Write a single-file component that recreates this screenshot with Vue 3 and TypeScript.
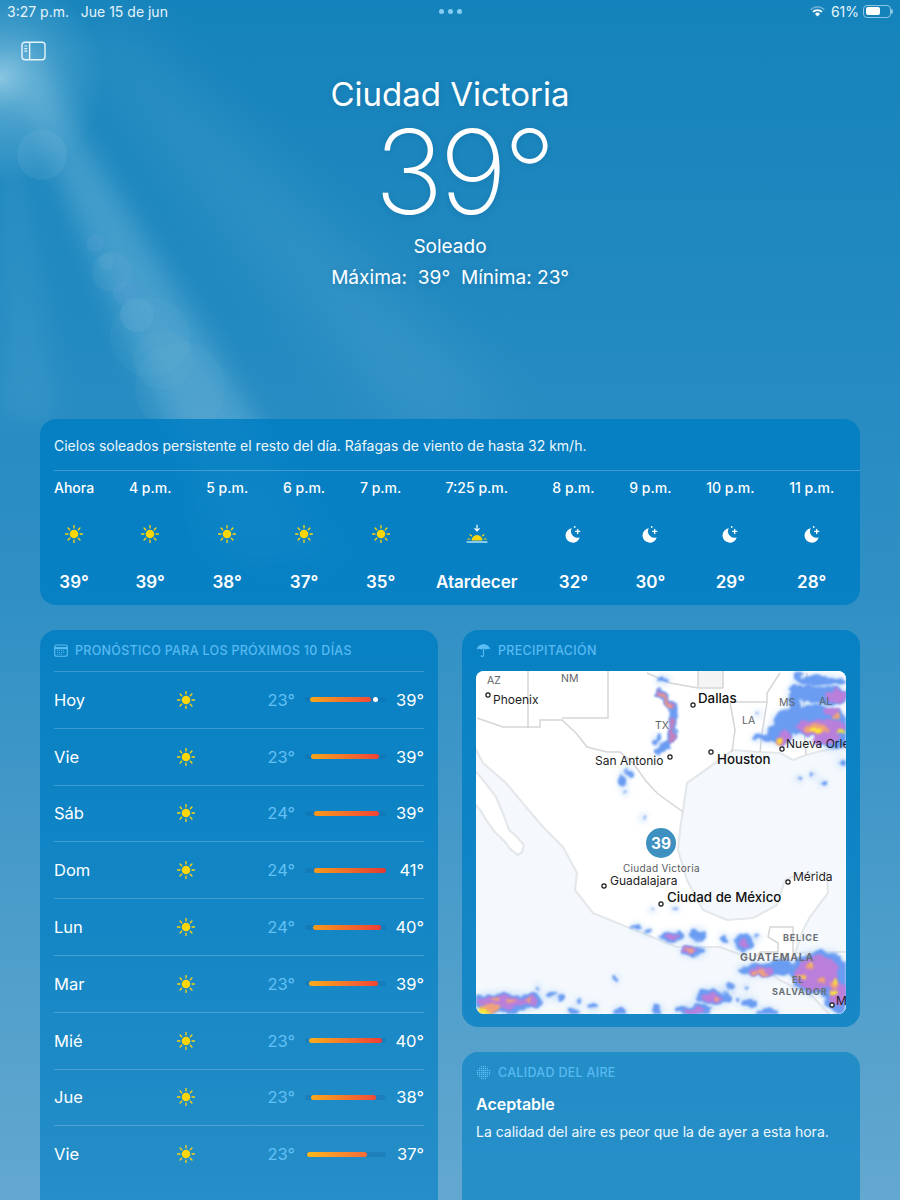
<template>
  <div class="weather">
    <!-- sky: sun rays and lens flares, sits behind the cards -->
    <svg class="sky" viewBox="0 0 900 1200" width="900" height="1200" aria-hidden="true">
      <defs>
        <filter id="soft" x="-30%" y="-30%" width="160%" height="160%"><feGaussianBlur stdDeviation="14" /></filter>
        <filter id="softer" x="-50%" y="-50%" width="200%" height="200%"><feGaussianBlur stdDeviation="30" /></filter>
        <radialGradient id="sunGlow">
          <stop offset="0" stop-color="#b9e1f0" stop-opacity="0.7" />
          <stop offset="0.3" stop-color="#a6d6ea" stop-opacity="0.4" />
          <stop offset="1" stop-color="#8fcbe6" stop-opacity="0" />
        </radialGradient>
      </defs>
      <circle cx="0" cy="78" r="105" fill="url(#sunGlow)" />
      <polygon points="0,50 30,50 340,560 230,560" fill="#a9d8ec" opacity="0.28" filter="url(#soft)" />
      <polygon points="40,20 120,20 520,420 400,420" fill="#a9d8ec" opacity="0.12" filter="url(#softer)" />
      <polygon points="0,130 20,140 60,420 0,420" fill="#a9d8ec" opacity="0.1" filter="url(#soft)" />
      <circle v-for="(f, i) in flares" :key="i" :cx="f[0]" :cy="f[1]" :r="f[2]" :fill="f[3]" :opacity="f[4]" />
    </svg>

    <div class="status">
      <span>3:27 p.m.&nbsp;&nbsp; Jue 15 de jun</span>
      <span class="status-dots"><i /><i /><i /></span>
      <span class="status-right">
        <svg class="wifi" width="15" height="11" viewBox="0 0 15 11">
          <path d="M.8 3.6a9.6 9.6 0 0 1 13.4 0" fill="none" stroke="#fff" stroke-opacity=".35" stroke-width="1.7" />
          <path d="M3 5.9a6.4 6.4 0 0 1 9 0" fill="none" stroke="#fff" stroke-width="1.8" />
          <path d="M7.5 10.4 5 7.9a3.5 3.5 0 0 1 5 0z" fill="#fff" />
        </svg>
        <span>61%</span>
        <span class="battery"><b /></span>
        <span class="nub" />
      </span>
    </div>

    <header class="head">
      <svg class="side-icon" width="25" height="20" viewBox="0 0 25 20" fill="none" stroke="#e6f4fb" stroke-width="1.4">
        <rect x="1" y="1.2" width="23" height="17.6" rx="3" />
        <path d="M8.6 1.2v17.6" />
        <path d="M3.4 5h2.8M3.4 7.6h2.8M3.4 10.2h2.8" stroke-width="1.2" />
      </svg>
      <div class="head-main">
        <div class="city">Ciudad Victoria</div>
        <div class="now">39°</div>
        <div class="cond">Soleado</div>
        <div class="range">Máxima:&nbsp; 39°&nbsp; Mínima: 23°</div>
      </div>
    </header>

    <section class="card hourly">
      <p class="summary">Cielos soleados persistente el resto del día. Ráfagas de viento de hasta 32 km/h.</p>
      <div class="hours">
        <div v-for="h in hours" :key="h.time" class="hour">
          <span class="hour-time">{{ h.time }}</span>
          <span class="hour-icon" v-html="h.icon"></span>
          <span class="hour-temp">{{ h.temp }}</span>
        </div>
      </div>
    </section>

    <div class="columns">
      <section class="card forecast">
        <h3 class="card-title">
          <svg width="14" height="13" viewBox="0 0 14 13" fill="none" stroke="#5cbdf4" stroke-width="1.1">
            <rect x=".7" y="1" width="12.6" height="11.2" rx="2" />
            <path d="M.7 4.1h12.6" stroke-width="2" />
            <path d="M3 6.6h8M3 8.4h8M3 10.2h6" stroke-width=".8" stroke-dasharray="1.2 .8" />
          </svg>
          PRONÓSTICO PARA LOS PRÓXIMOS 10 DÍAS
        </h3>
        <div v-for="(d, i) in days" :key="i" class="day">
          <span class="day-name">{{ d.name }}</span>
          <span class="day-icon" v-html="svgSun"></span>
          <span class="day-low">{{ d.low }}°</span>
          <span class="track">
            <span class="fill" :style="barStyle(d)"></span>
            <span v-if="d.now" class="now-dot" :style="{ left: d.now + 'px' }"></span>
          </span>
          <span class="day-high">{{ d.high }}°</span>
        </div>
      </section>

      <div class="stack">
        <section class="card precip">
          <h3 class="card-title">
            <svg width="15" height="15" viewBox="0 0 15 15" fill="#5cbdf4">
              <path d="M7.5 1.2c3.6 0 6.4 2.400 6.800 5.600-.8-.8-1.500-1-2.200-1-.8 0-1.500.3-2.200 1-.7-.7-1.500-1-2.400-1s-1.700.3-2.400 1c-.7-.7-1.400-1-2.200-1-.7 0-1.400.2-2.200 1C1.100 3.600 3.900 1.200 7.500 1.200z" />
              <path d="M7.500 6.500v5.800c0 1.600-2.200 1.600-2.200.2" fill="none" stroke="#5cbdf4" stroke-width="1.100" stroke-linecap="round" />
            </svg>
            PRECIPITACIÓN
          </h3>
          <div class="map">
            <svg viewBox="0 0 370 343" width="370" height="343" class="map-svg">
              <defs>
                <filter id="rain" filterUnits="userSpaceOnUse" x="0" y="0" width="370" height="343">
                  <feTurbulence type="fractalNoise" baseFrequency="0.1" numOctaves="2" seed="4" result="n" />
                  <feDisplacementMap in="SourceGraphic" in2="n" scale="10" xChannelSelector="R" yChannelSelector="G" />
                  <feGaussianBlur stdDeviation="1.100" />
                </filter>
                <filter id="rainWide" filterUnits="userSpaceOnUse" x="0" y="0" width="370" height="343"><feGaussianBlur stdDeviation="3" /></filter>
                <filter id="coast" filterUnits="userSpaceOnUse" x="-10" y="-10" width="390" height="363"><feGaussianBlur stdDeviation="0.4" /></filter>
              </defs>
              <rect width="370" height="343" fill="#f5f9fd" />
              <g filter="url(#coast)">
                <path :d="landPath" fill="#fff" stroke="#e5e8ea" stroke-width="2.200" stroke-linejoin="round" />
                <path :d="bajaPath" fill="#fff" stroke="#e5e8ea" stroke-width="2.200" stroke-linejoin="round" />
                <rect x="222" y="0" width="25" height="17" fill="#f4f4f5" />
                <path :d="borders" fill="none" stroke="#d6d6d8" stroke-width="1.500" />
              </g>

              <g filter="url(#rainWide)" opacity=".45">
                <ellipse v-for="(b, i) in rain.blue" :key="i" :cx="b[0]" :cy="b[1]" :rx="b[2] + 2" :ry="b[3] + 2" fill="#a7cdf7" />
              </g>
              <g filter="url(#rain)">
                <path d="M184 22 197 36 197 56 194 72 181 81" fill="none" stroke="#6b9cf2" stroke-width="7" stroke-linecap="round" stroke-linejoin="round" />
                <ellipse v-for="(b, i) in rain.blue" :key="i" :cx="b[0]" :cy="b[1]" :rx="b[2]" :ry="b[3]" fill="#6b9cf2" />
              </g>
              <g filter="url(#rain)">
                <path d="M184 22 197 36M197 50 196 70" fill="none" stroke="#c27fbf" stroke-width="4" stroke-linecap="round" />
                <ellipse v-for="(b, i) in rain.purple" :key="i" :cx="b[0]" :cy="b[1]" :rx="b[2]" :ry="b[3]" fill="#b97fdb" />
              </g>
              <g filter="url(#rain)">
                <path d="M186 24 195 35" fill="none" stroke="#efa083" stroke-width="2" stroke-linecap="round" />
                <ellipse v-for="(b, i) in rain.orange" :key="i" :cx="b[0]" :cy="b[1]" :rx="b[2]" :ry="b[3]" fill="#f0a27a" />
              </g>
              <g filter="url(#rain)">
                <ellipse v-for="(b, i) in rain.yellow" :key="i" :cx="b[0]" :cy="b[1]" :rx="b[2]" :ry="b[3]" fill="#fbe733" />
              </g>

              <circle v-for="(c, i) in cityDots" :key="i" :cx="c[0]" :cy="c[1]" r="2.100" fill="#fff" stroke="#1a1a1a" stroke-width="1.200" />
              <text v-for="(l, i) in labels" :key="i" :x="l.x" :y="l.y" :class="l.kind">{{ l.text }}</text>

              <circle cx="185" cy="172" r="15" fill="#3d90bf" />
              <text x="185" y="177.500" text-anchor="middle" class="pin">39</text>
            </svg>
          </div>
        </section>

        <section class="card air">
          <h3 class="card-title">
            <svg width="15" height="15" viewBox="0 0 15 15" fill="#5cbdf4">
              <circle v-for="(p, i) in airDots" :key="i" :cx="p[0]" :cy="p[1]" :r="p[2]" />
            </svg>
            CALIDAD DEL AIRE
          </h3>
          <div class="air-level">Aceptable</div>
          <p class="air-text">La calidad del aire es peor que la de ayer a esta hora.</p>
        </section>
      </div>
    </div>
  </div>
</template>

<script setup lang="ts">
type Day = { name: string; low: number; high: number; from: number; to: number; c1: string; c2: string; now?: number }
type Blob4 = [number, number, number, number]

const rays = [0, 45, 90, 135, 180, 225, 270, 315]
  .map((a) => `<line x1="10" y1="1.600" x2="10" y2="3.900" transform="rotate(${a} 10 10)"/>`)
  .join('')
const svgSun = `<svg viewBox="0 0 20 20" width="20" height="20"><circle cx="10" cy="10" r="4.300" fill="#FFD60A"/><g stroke="#FFD60A" stroke-width="1.300" stroke-linecap="round">${rays}</g></svg>`
const svgMoon = `<svg viewBox="0 0 20 20" width="20" height="20"><path d="M8.800 4.300A7.200 7.200 0 1 0 16.700 13.200 6.300 6.300 0 0 1 8.800 4.300Z" fill="#fff"/><path d="M14.700 5.300v4.200M12.600 7.400h4.200" stroke="#fff" stroke-width="1.300" stroke-linecap="round"/><circle cx="11.700" cy="2.900" r=".9" fill="#fff"/></svg>`
const svgSunset = `<svg viewBox="0 0 22 20" width="22" height="20"><path d="M11 1v5.600M8.800 4.700 11 7l2.200-2.300" fill="none" stroke="#fff" stroke-width="1.200" stroke-linecap="round"/><path d="M5.500 16.600a5.500 5.500 0 0 1 11 0z" fill="#FFD60A"/><g stroke="#FFD60A" stroke-width="1.200" stroke-linecap="round"><path d="M1.800 15h2M18.200 15h2M4 10.600l1.500 1.200M18 10.600l-1.500 1.200"/></g><path d="M.6 18h20.800" stroke="#A6DDF5" stroke-width="1.600"/></svg>`

const hours = [
  { time: 'Ahora', icon: svgSun, temp: '39°' },
  { time: '4 p.m.', icon: svgSun, temp: '39°' },
  { time: '5 p.m.', icon: svgSun, temp: '38°' },
  { time: '6 p.m.', icon: svgSun, temp: '37°' },
  { time: '7 p.m.', icon: svgSun, temp: '35°' },
  { time: '7:25 p.m.', icon: svgSunset, temp: 'Atardecer' },
  { time: '8 p.m.', icon: svgMoon, temp: '32°' },
  { time: '9 p.m.', icon: svgMoon, temp: '30°' },
  { time: '10 p.m.', icon: svgMoon, temp: '29°' },
  { time: '11 p.m.', icon: svgMoon, temp: '28°' },
]

// from / to are px inside the 81px track
const days: Day[] = [
  { name: 'Hoy', low: 23, high: 39, from: 5, to: 66, c1: '#F7A51C', c2: '#F14B38', now: 68 },
  { name: 'Vie', low: 23, high: 39, from: 6, to: 74, c1: '#F7A51C', c2: '#F14438' },
  { name: 'Sáb', low: 24, high: 39, from: 9, to: 74, c1: '#F79A1C', c2: '#F14438' },
  { name: 'Dom', low: 24, high: 41, from: 9, to: 81, c1: '#F79A1C', c2: '#E53935' },
  { name: 'Lun', low: 24, high: 40, from: 8, to: 76, c1: '#F79A1C', c2: '#EF3E38' },
  { name: 'Mar', low: 23, high: 39, from: 4, to: 73, c1: '#F9AE1C', c2: '#F14438' },
  { name: 'Mié', low: 23, high: 40, from: 4, to: 77, c1: '#F9AE1C', c2: '#EF3E38' },
  { name: 'Jue', low: 23, high: 38, from: 6, to: 71, c1: '#F9A81C', c2: '#F14B38' },
  { name: 'Vie', low: 23, high: 37, from: 2, to: 62, c1: '#FBB81C', c2: '#F56B38' },
]

function barStyle(d: Day) {
  return {
    left: d.from + 'px',
    width: d.to - d.from + 'px',
    background: `linear-gradient(90deg, ${d.c1}, ${d.c2})`,
  }
}

// sky flares: cx, cy, r, colour, opacity
const flares: [number, number, number, string, number][] = [
  [42, 155, 25, '#bfe3f2', 0.09],
  [95, 243, 9, '#5a9fd6', 0.25],
  [112, 272, 20, '#bfe3f2', 0.06],
  [106, 262, 8, '#bfe3f2', 0.06],
  [125, 293, 12, '#5a9fd6', 0.25],
  [137, 315, 17, '#6cb0dc', 0.25],
  [150, 337, 40, '#bfe3f2', 0.04],
  [163, 360, 30, '#bfe3f2', 0.04],
  [180, 387, 45, '#bfe3f2', 0.04],
  [215, 505, 35, '#bfe3f2', 0.05],
  [235, 530, 48, '#bfe3f2', 0.05],
]

const landPath =
  'M-4 -4H374V76L345 80 330 84 317 89 304 82 284 81 257 79 235 95 211 112 207 139 204 159 202 179 211 209 227 239 251 249 277 247 301 234 309 209 321 204 351 202 352 222 334 246 327 259 319 282 345 281 374 281V347H357L337 326 304 309 271 286 244 276 201 276 151 256 117 242 99 219 101 202 87 176 67 156 50 136 30 112 7 92 -4 71Z'
const bajaPath = 'M-4 96 8 110 20 126 28 145 33 159 40 165 48 174 46 181 42 184 34 178 30 172 18 160 10 149 5 140 -4 130Z'
const borders =
  'M1 47 27 56H64V49H86L100 62 111 76 131 81H144L157 92 170 110 181 122 207 141M52 -2V57M132 -2V47H86M171 2 194 12 222 17H247M222 -2V17M247 -2V17M254 31 259 59 256 81M254 31H291L286 62 284 81M291 31V22L304 2M331 2 327 39 330 84M294 256H317V282M294 256 292 266 302 272V281H284L277 289'

const cityDots = [
  [12, 24], [217, 34], [194, 86], [235, 81], [306, 78], [128, 215], [185, 233], [312, 211], [356, 334],
]

const labels = [
  { x: 11, y: 13, text: 'AZ', kind: 'st' },
  { x: 85, y: 11, text: 'NM', kind: 'st' },
  { x: 179, y: 58, text: 'TX', kind: 'st' },
  { x: 266, y: 53, text: 'LA', kind: 'st' },
  { x: 303, y: 35, text: 'MS', kind: 'st' },
  { x: 343, y: 34, text: 'AL', kind: 'st' },
  { x: 17, y: 33, text: 'Phoenix', kind: 'sm' },
  { x: 222, y: 32, text: 'Dallas', kind: 'lg' },
  { x: 119, y: 94, text: 'San Antonio', kind: 'sm' },
  { x: 241, y: 93, text: 'Houston', kind: 'lg' },
  { x: 310, y: 77, text: 'Nueva Orle', kind: 'sm' },
  { x: 147, y: 201, text: 'Ciudad Victoria', kind: 'here' },
  { x: 134, y: 214, text: 'Guadalajara', kind: 'sm' },
  { x: 191, y: 231, text: 'Ciudad de México', kind: 'lg' },
  { x: 317, y: 210, text: 'Mérida', kind: 'sm' },
  { x: 307, y: 270, text: 'BELICE', kind: 'country' },
  { x: 264, y: 290, text: 'GUATEMALA', kind: 'country big' },
  { x: 316, y: 312, text: 'EL', kind: 'country' },
  { x: 296, y: 324, text: 'SALVADOR', kind: 'country' },
  { x: 360, y: 334, text: 'M', kind: 'sm' },
]

const rain: Record<'blue' | 'purple' | 'orange' | 'yellow', Blob4[]> = {
  blue: [
    [350, 25, 22, 9], [332, 23, 12, 8], [318, 28, 6, 14], [335, 50, 38, 15], [358, 62, 16, 16], [304, 63, 14, 9], [289, 67, 12, 3],
    [345, 10, 24, 5], [323, 5, 4, 5], [187, 9, 6, 3], [181, 69, 2, 4], [147, 109, 3, 7], [154, 102, 3, 2], [150, 99, 2, 3],
    [149, 121, 2, 1.5], [167, 147, 1.5, 3], [323, 108, 2, 2], [337, 104, 2, 2], [347, 112, 3, 2], [366, 92, 4, 3], [282, 43, 2, 2],
    [197, 266, 11, 5], [221, 264, 8, 6], [217, 280, 12, 5], [267, 272, 10, 8], [248, 268, 3, 4], [281, 266, 3, 1.5], [171, 261, 3, 2],
    [161, 256, 4, 2], [199, 237, 3, 1.5], [176, 239, 1.5, 1.5], [284, 299, 22, 6], [344, 302, 30, 22], [361, 326, 12, 16], [304, 296, 12, 8],
    [27, 332, 32, 10], [57, 329, 10, 6], [76, 324, 4, 3], [84, 326, 3, 3], [103, 330, 2, 2], [62, 316, 2, 2], [237, 326, 18, 8], [254, 316, 5, 4],
    [274, 332, 6, 5], [140, 308, 2, 3], [263, 329, 2, 3], [270, 316, 2, 2], [217, 339, 18, 5], [181, 339, 5, 5], [144, 341, 6, 4], [291, 342, 10, 5],
    [97, 341, 5, 4], [117, 336, 4, 3],
  ],
  purple: [
    [345, 57, 25, 9], [308, 65, 8, 7], [360, 25, 11, 6], [355, 40, 10, 4], [350, 68, 14, 5], [197, 266, 6, 3], [214, 279, 8, 3], [268, 273, 5, 4],
    [341, 302, 22, 17], [284, 301, 12, 4], [361, 322, 10, 12], [27, 331, 25, 7], [55, 330, 6, 4], [237, 327, 12, 5], [217, 340, 10, 3],
  ],
  orange: [
    [340, 58, 13, 5], [304, 70, 3, 4], [360, 45, 4, 3], [214, 279, 4, 1.5], [334, 296, 4, 3], [358, 314, 5, 4], [284, 302, 8, 2], [345, 310, 4, 3],
    [325, 305, 4, 2], [14, 338, 10, 4], [35, 330, 5, 2], [18, 328, 3, 2], [52, 330, 2, 2], [240, 328, 3, 2],
  ],
  yellow: [
    [340, 59, 7, 3], [365, 62, 5, 2], [304, 68, 1.5, 3], [334, 294, 2, 2], [359, 311, 2, 3], [357, 322, 5, 2], [327, 306, 2, 1.5], [9, 341, 7, 2.5],
  ],
}

// small dotted sphere of the air quality icon
const airDots: [number, number, number][] = []
for (let y = 0; y < 7; y++) {
  for (let x = 0; x < 7; x++) {
    const dx = x - 3
    const dy = y - 3
    const dist = Math.sqrt(dx * dx + dy * dy)
    if (dist < 3.6) airDots.push([1.500 + x * 2, 1.500 + y * 2, 0.95 - dist * 0.1])
  }
}
</script>

<style>
html, body {
  margin: 0;
  background: #2a8fc5;
}
</style>

<style scoped>
.weather {
  position: relative;
  width: 900px;
  height: 1200px;
  overflow: hidden;
  color: #fff;
  font-family: Inter, "Liberation Sans", sans-serif;
  background: linear-gradient(180deg, #1583bb 0%, #2189c0 25%, #3090c5 50%, #4a9cca 75%, #63a8d0 100%);
}

.sky {
  position: absolute;
  left: 0;
  top: 0;
}

.status {
  position: relative;
  display: grid;
  grid-template-columns: 1fr auto 1fr;
  align-items: center;
  height: 22px;
  margin-bottom: 2px;
  padding: 0 7px;
  font-size: 14px;
  color: #e4f3fb;
}

.status-dots {
  display: flex;
  gap: 4px;
}

.status-dots i {
  width: 5px;
  height: 5px;
  border-radius: 50%;
  background: #86cdf3;
}

.status-right {
  display: flex;
  align-items: center;
  justify-content: flex-end;
  gap: 4px;
}

.wifi {
  margin-right: 2px;
}

.battery {
  width: 28px;
  height: 13px;
  box-sizing: border-box;
  border: 1px solid #8cc6e6;
  border-radius: 4px;
  padding: 1.5px;
  display: flex;
}

.battery b {
  width: 61%;
  background: #fff;
  border-radius: 2px;
}

.nub {
  width: 2px;
  height: 5px;
  margin-left: -4px;
  background: #8cc6e6;
  border-radius: 0 2px 2px 0;
}

.head {
  position: relative;
  display: grid;
  grid-template-columns: 1fr auto 1fr;
  height: 395px;
  padding: 0 21px;
}

.side-icon {
  margin-top: 17px;
}

.head-main {
  grid-column: 2;
  display: flex;
  flex-direction: column;
  align-items: center;
  text-shadow: 0 1px 6px rgba(0, 60, 110, 0.18);
}

.city {
  margin-top: 50px;
  font-size: 33px;
  line-height: 40px;
}

.now {
  margin-top: 10px;
  font-size: 117px;
  font-weight: 150;
  letter-spacing: -4.500px;
  line-height: 96px;
  padding-left: 26px;
}

.cond {
  margin-top: 15px;
  font-size: 19px;
  line-height: 24px;
}

.range {
  margin-top: 6px;
  font-size: 19.100px;
  line-height: 24px;
  white-space: nowrap;
}

.card {
  position: relative;
  border-radius: 16px;
}

.hourly {
  margin: 0 40px;
  height: 186px;
  box-sizing: border-box;
  background: rgba(0, 126, 195, 0.85);
}

.summary {
  margin: 0 0 0 14px;
  padding: 17px 0 15px;
  font-size: 14px;
  line-height: 19px;
  border-bottom: 1px solid rgba(255, 255, 255, 0.22);
  color: #eef8fd;
}

.hours {
  display: flex;
  gap: 34.800px;
  padding: 7px 0 0 14px;
}

.hour {
  display: flex;
  flex-direction: column;
  align-items: center;
}

.hour-time {
  font-size: 14px;
  font-weight: 500;
  line-height: 20px;
  white-space: nowrap;
}

.hour-icon {
  display: flex;
  margin-top: 24px;
  height: 24px;
  align-items: center;
}

.hour-icon :deep(svg) {
  display: block;
}

.hour-temp {
  margin-top: 25px;
  font-size: 17px;
  font-weight: 600;
  line-height: 22px;
  white-space: nowrap;
}

.columns {
  display: grid;
  grid-template-columns: 398px 398px;
  gap: 24px;
  margin: 25px 40px 0;
}

.forecast {
  height: 620px;
  padding: 0 14px;
  background: linear-gradient(180deg, rgba(0, 126, 195, 0.85), rgba(0, 126, 195, 0.6));
}

.card-title {
  display: flex;
  align-items: center;
  gap: 7px;
  height: 41px;
  margin: 0;
  font-size: 12.500px;
  font-weight: 500;
  letter-spacing: 0.3px;
  color: #58baf2;
}

.day {
  display: grid;
  grid-template-columns: 122px 20px 109px 81px 38px;
  align-items: center;
  height: 55.800px;
  border-top: 1px solid rgba(255, 255, 255, 0.2);
  font-size: 16.500px;
}

.day-icon {
  display: flex;
}

.day-icon :deep(svg) {
  display: block;
}

.day-low {
  text-align: right;
  padding-right: 10px;
  color: #62c0f5;
}

.day-high {
  text-align: right;
}

.track {
  position: relative;
  height: 5px;
  border-radius: 3px;
  background: rgba(20, 90, 150, 0.25);
}

.fill {
  position: absolute;
  top: 0;
  bottom: 0;
  border-radius: 3px;
}

.now-dot {
  position: absolute;
  top: 0;
  width: 5px;
  height: 5px;
  border-radius: 50%;
  background: #fff;
}

.stack {
  display: flex;
  flex-direction: column;
  gap: 25px;
}

.precip {
  height: 397px;
  padding: 0 14px;
  background: linear-gradient(180deg, rgba(0, 126, 195, 0.85), rgba(0, 126, 195, 0.72));
}

.map {
  height: 343px;
  border-radius: 8px;
  overflow: hidden;
}

.map-svg {
  display: block;
}

.map text {
  font-family: Inter, "Liberation Sans", sans-serif;
}

.st {
  font-size: 10.500px;
  fill: #5f6468;
}

.sm {
  font-size: 12px;
  fill: #1c1c1e;
}

.lg {
  font-size: 13.300px;
  font-weight: 500;
  fill: #111;
}

.here {
  font-size: 10px;
  fill: #55595d;
  letter-spacing: 0.3px;
}

.country {
  font-size: 9px;
  font-weight: 700;
  letter-spacing: 0.8px;
  fill: #6a6f75;
}

.big {
  font-size: 10.500px;
}

.pin {
  font-size: 15.500px;
  font-weight: 700;
  fill: #fff;
}

.air {
  height: 200px;
  padding: 0 14px;
  background: rgba(0, 126, 195, 0.6);
}

.air-level {
  font-size: 16px;
  font-weight: 600;
  line-height: 22px;
}

.air-text {
  margin: 7px 0 0;
  font-size: 14px;
  line-height: 20px;
  color: #eef8fd;
}
</style>
